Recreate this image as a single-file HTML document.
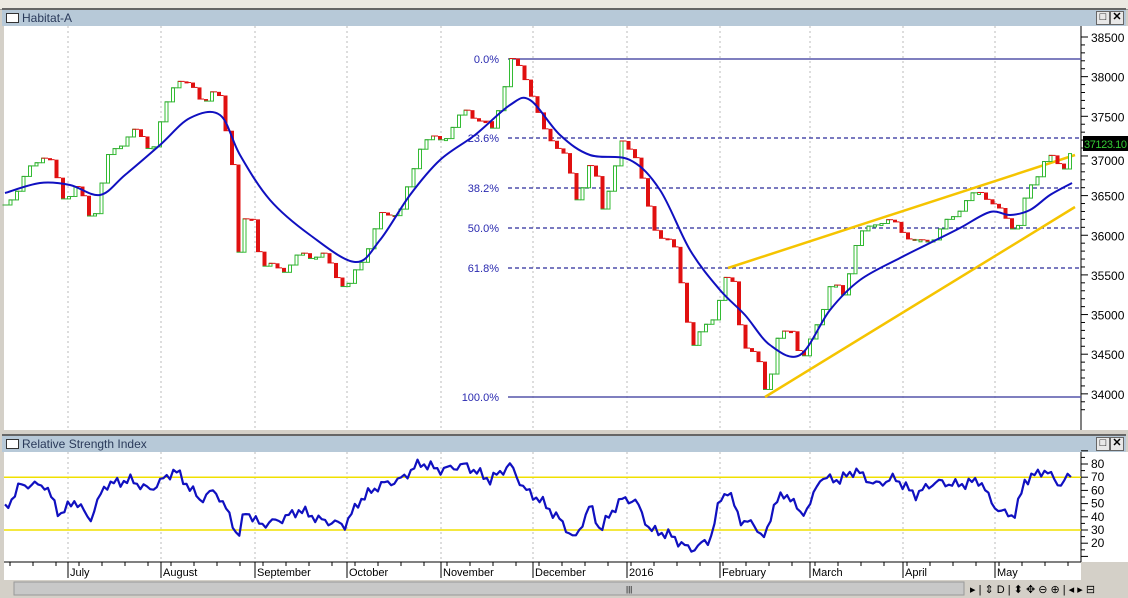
<!DOCTYPE html>
<html><head><meta charset="utf-8"><style>
body{margin:0;width:1128px;height:598px;overflow:hidden;background:#d4d0c8;font-family:"Liberation Sans",sans-serif;position:relative}
.tb{position:absolute;left:0;top:0;width:1128px;height:9px;background:#ece9e2;border-bottom:1px solid #999}
.title{position:absolute;left:2px;width:1124px;height:16px;background:#b7c9d8;border-top:2px solid #666;font-size:12px;color:#2a3a5a;line-height:16px}
.title .ic{display:inline-block;width:11px;height:8px;border:1px solid #333;background:#fff;margin:0 3px 0 4px;vertical-align:-1px}
.btn{position:absolute;top:1px;width:12px;height:12px;background:#e8e8e8;border:1px solid #666;font-size:11px;line-height:11px;text-align:center;color:#000;font-weight:bold}
svg{position:absolute;left:0;top:0}
</style></head><body>
<div class="tb"></div>
<div class="title" style="top:8px"><span class="ic"></span>Habitat-A<div class="btn" style="left:1094px">□</div><div class="btn" style="left:1108px">✕</div></div>
<div class="title" style="top:434px"><span class="ic"></span>Relative Strength Index<div class="btn" style="left:1094px">□</div><div class="btn" style="left:1108px">✕</div></div>
<svg width="1128" height="598" id="s" font-family="Liberation Sans, sans-serif"></svg>
<script>
const s=document.getElementById('s');let h='';
h+='<rect x="4" y="26" width="1077" height="404" fill="#fff"/>';
h+='<rect x="1081" y="26" width="47" height="404" fill="#fff"/>';
h+='<rect x="4" y="452" width="1077" height="110" fill="#fff"/>';
h+='<rect x="1081" y="452" width="47" height="110" fill="#fff"/>';
h+='<rect x="4" y="562" width="1077" height="18" fill="#fff"/>';
h+='<line x1="1081" y1="26" x2="1081" y2="430" stroke="#000"/><line x1="1081" y1="452" x2="1081" y2="562" stroke="#000"/><line x1="4" y1="562" x2="1081" y2="562" stroke="#000"/>';
h+='<rect x="0" y="430" width="1128" height="4" fill="#d4d0c8"/>';
const gx=[68,161,255,347,441,533,627,720,810,903,995];
gx.forEach(x=>{h+=`<line x1="${x}" y1="26" x2="${x}" y2="430" stroke="#bbb" stroke-dasharray="2,3"/><line x1="${x}" y1="452" x2="${x}" y2="562" stroke="#bbb" stroke-dasharray="2,3"/>`});
const py=p=>37+(38500-p)*0.0793;
for(let p=33800;p<=38500;p+=100){const y=py(p);h+=`<line x1="1081" y1="${y}" x2="${p%500?1085:1088}" y2="${y}" stroke="#000"/>`}
for(let p=34000;p<=38500;p+=500){if(p==37000)continue;h+=`<text x="1091" y="${py(p)+5}" font-size="12">${p}</text>`}
h+=`<text x="1091" y="${py(37000)+9}" font-size="12">37000</text>`;
[[59,'0.0%',0],[138,'23.6%',1],[188,'38.2%',1],[228,'50.0%',1],[268,'61.8%',1],[397,'100.0%',0]].forEach(([y,t,d])=>{
h+=`<line x1="508" y1="${y}" x2="1081" y2="${y}" stroke="${d?'#2a2a9a':'#5555aa'}" stroke-width="${d?1.3:1.5}" ${d?'stroke-dasharray="4,3"':''}/>`;
h+=`<text x="499" y="${y+4}" font-size="11" fill="#2a2ab0" text-anchor="end">${t}</text>`});
h+='<line x1="728" y1="268" x2="1075" y2="155" stroke="#f5c400" stroke-width="2.5"/><line x1="765" y1="397" x2="1075" y2="207" stroke="#f5c400" stroke-width="2.5"/>';
const P=[[5,205],[20,180],[45,150],[60,200],[75,185],[90,225],[105,160],[130,130],[150,150],[175,75],[200,100],[215,90],[232,170],[238,280],[245,200],[260,265],[280,270],[300,255],[320,255],[345,290],[360,260],[380,215],[400,210],[420,140],[440,140],[465,110],[490,130],[510,60],[525,80],[540,130],[560,150],[575,200],[590,160],[600,210],[620,145],[635,155],[650,230],[670,240],[690,345],[710,320],[720,290],[728,270],[740,340],[755,360],[765,395],[775,340],[790,330],[800,360],[810,340],[830,280],[840,300],[855,240],[875,220],[895,225],[915,245],[935,235],[960,205],[980,190],[995,210],[1015,230],[1025,195],[1045,155],[1060,170],[1070,148]];
function interp(A,x){for(let i=0;i<A.length-1;i++){if(x>=A[i][0]&&x<=A[i+1][0]){const t=(x-A[i][0])/(A[i+1][0]-A[i][0]);return A[i][1]+t*(A[i+1][1]-A[i][1])}}return A[A.length-1][1]}
let prev=interp(P,5);
for(let x=9;x<=1072;x+=6.5){let c=interp(P,x)+Math.sin(x*1.7)*4;const up=c<prev;const top=Math.min(c,prev),ht=Math.max(2,Math.abs(c-prev));
h+=`<line x1="${x-6.5}" y1="${prev}" x2="${x}" y2="${prev}" stroke="${up?'#3a3':'#d11'}" stroke-width="1"/>`;
h+= up?`<rect x="${x}" y="${top}" width="3" height="${ht}" fill="#fff" stroke="#3b3" stroke-width="1"/>`:`<rect x="${x}" y="${top}" width="4" height="${ht}" fill="#e01010"/>`;prev=c}
const M=[[5,193],[40,183],[70,185],[100,195],[125,175],[160,145],[190,118],[220,115],[240,155],[270,200],[310,235],[355,262],[380,240],[410,195],[440,160],[475,135],[510,105],[530,100],[560,135],[590,155],[630,160],[660,190],[690,250],[720,290],[745,315],[770,345],[800,355],[830,310],[860,280],[900,258],[930,243],[960,228],[990,212],[1010,215],[1030,210],[1050,195],[1072,183]];
function smooth(A){let d=`M${A[0][0]},${A[0][1]}`;for(let i=0;i<A.length-1;i++){const p0=A[Math.max(0,i-1)],p1=A[i],p2=A[i+1],p3=A[Math.min(A.length-1,i+2)];
d+=` C${p1[0]+(p2[0]-p0[0])/6},${p1[1]+(p2[1]-p0[1])/6} ${p2[0]-(p3[0]-p1[0])/6},${p2[1]-(p3[1]-p1[1])/6} ${p2[0]},${p2[1]}`}return d}
h+=`<path d="${smooth(M)}" fill="none" stroke="#1010c0" stroke-width="2"/>`;
h+=`<rect x="1083" y="136" width="45" height="15" fill="#000"/><text x="1084" y="148" font-size="11" fill="#3c3" textLength="43">37123.10</text>`;
const ry=v=>464+(80-v)*1.32;
for(let v=10;v<=90;v+=5){h+=`<line x1="1081" y1="${ry(v)}" x2="${v%10?1085:1088}" y2="${ry(v)}" stroke="#000"/>`}
for(let v=20;v<=80;v+=10)h+=`<text x="1091" y="${ry(v)+4}" font-size="12">${v}</text>`;
h+=`<line x1="4" y1="${ry(70)}" x2="1081" y2="${ry(70)}" stroke="#f0e000" stroke-width="1.5"/><line x1="4" y1="${ry(30)}" x2="1081" y2="${ry(30)}" stroke="#f0e000" stroke-width="1.5"/>`;
const R=[[5,510],[20,485],[45,485],[60,515],[75,500],[90,520],[105,485],[130,480],[150,490],[175,470],[200,500],[215,490],[232,520],[238,540],[245,510],[260,525],[280,520],[300,510],[320,520],[345,525],[360,500],[380,485],[400,480],[420,463],[440,470],[465,465],[490,480],[510,465],[525,490],[540,500],[560,520],[575,540],[590,505],[600,530],[620,500],[635,500],[650,530],[670,535],[690,550],[710,540],[720,500],[728,490],[740,520],[755,525],[765,540],[775,500],[790,495],[800,515],[810,505],[820,478],[840,480],[855,470],[875,485],[895,478],[915,495],[935,482],[960,485],[980,480],[990,500],[1000,512],[1015,515],[1025,480],[1045,470],[1060,485],[1072,474]];
let rp=[];for(let x=5;x<=1072;x+=3.3){let v=interp(R,x)+Math.sin(x*2.3)*3+Math.sin(x*0.9)*3;rp.push(x.toFixed(1)+','+v.toFixed(1))}
h+=`<polyline points="${rp.join(' ')}" fill="none" stroke="#1010c0" stroke-width="2.2" stroke-linejoin="round"/>`;
for(let x=10;x<1078;x+=23)h+=`<line x1="${x}" y1="562" x2="${x}" y2="566" stroke="#000"/>`;
['July','August','September','October','November','December','2016','February','March','April','May'].forEach((t,i)=>{h+=`<line x1="${gx[i]}" y1="562" x2="${gx[i]}" y2="578" stroke="#000"/><text x="${gx[i]+2}" y="576" font-size="11">${t}</text>`});
h+='<rect x="0" y="580" width="1128" height="18" fill="#d4d0c8"/><rect x="14" y="582" width="950" height="13" fill="#c8c8c8" stroke="#999"/><text x="626" y="592" font-size="8">|||</text>';
h+='<text x="970" y="593" font-size="11">▸ | ⇕ D | ⬍ ✥ ⊖ ⊕ | ◂ ▸ ⊟</text>';
s.innerHTML=h;
</script>
</body></html>
